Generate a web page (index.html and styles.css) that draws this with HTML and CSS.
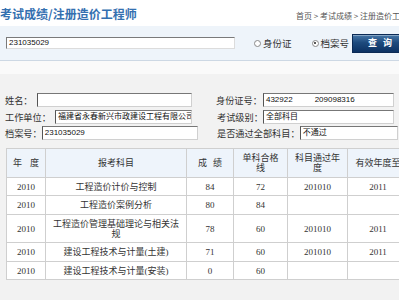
FILE: index.html
```html
<!DOCTYPE html>
<html lang="zh-CN">
<head>
<meta charset="utf-8">
<title>考试成绩/注册造价工程师</title>
<link rel="stylesheet" href="styles.css">
</head>
<body>
<div class="page">
  <div class="top">
    <h1 class="title">考试成绩/注册造价工程师</h1>
    <div class="crumbs">首页 &gt; 考试成绩 &gt; 注册造价工程师</div>
  </div>
  <div class="search">
    <div class="search-box">231035029</div>
    <label class="opt"><span class="radio"></span>身份证</label>
    <label class="opt opt-2"><span class="radio radio-on"></span>档案号</label>
    <button class="btn">查&nbsp;&nbsp;&nbsp;询</button>
  </div>
  <div class="spacer"></div>
  <div class="main">
    <div class="info">
      <div class="field"><span class="lbl">姓名：</span><span class="box box-name"></span></div>
      <div class="field field-r1"><span class="lbl">身份证号：</span><span class="box box-id">432922<span class="sp"></span>209098316</span></div>
      <div class="field"><span class="lbl">工作单位：</span><span class="box box-org">福建省永春新兴市政建设工程有限公司</span></div>
      <div class="field field-r"><span class="lbl">考试级别：</span><span class="box box-level">全部科目</span></div>
      <div class="field"><span class="lbl">档案号：</span><span class="box box-file">231035029</span></div>
      <div class="field field-r"><span class="lbl">是否通过全部科目：</span><span class="box box-pass">不通过</span></div>
    </div>
    <table class="scores">
      <colgroup>
        <col class="c1"><col class="c2"><col class="c3"><col class="c4"><col class="c5"><col class="c6">
      </colgroup>
      <thead>
        <tr>
          <th class="nw">年&nbsp;&nbsp;&nbsp;&nbsp;度</th>
          <th>报考科目</th>
          <th class="nw">成&nbsp;&nbsp;&nbsp;绩</th>
          <th>单科合格线</th>
          <th>科目通过年度</th>
          <th>有效年度至</th>
        </tr>
      </thead>
      <tbody>
        <tr><td>2010</td><td>工程造价计价与控制</td><td>84</td><td>72</td><td>201010</td><td>2011</td></tr>
        <tr><td>2010</td><td>工程造价案例分析</td><td>80</td><td>84</td><td></td><td></td></tr>
        <tr><td>2010</td><td>工程造价管理基础理论与相关法规</td><td>78</td><td>60</td><td>201010</td><td>2011</td></tr>
        <tr><td>2010</td><td>建设工程技术与计量(土建)</td><td>71</td><td>60</td><td>201010</td><td>2011</td></tr>
        <tr><td>2010</td><td>建设工程技术与计量(安装)</td><td>0</td><td>60</td><td></td><td></td></tr>
      </tbody>
    </table>
  </div>
</div>
</body>
</html>
```
FILE: styles.css
```css
html, body {
  margin: 0;
  padding: 0;
}
body {
  overflow: hidden;
  background: #f2f2f2;
  font-family: "Noto Sans CJK SC", "Liberation Sans", sans-serif;
  color: #333;
}
.page {
  width: 430px;
}
.top {
  height: 26px;
  background: #ffffff;
  display: flex;
  align-items: flex-end;
}
.title {
  margin: 0;
  flex: 0 0 296px;
  font-size: 12px;
  line-height: 14px;
  font-weight: bold;
  color: #3470b0;
  padding-bottom: 5px;
  white-space: nowrap;
}
.crumbs {
  font-size: 8px;
  line-height: 10px;
  color: #555;
  padding-bottom: 5px;
  white-space: nowrap;
}
.search {
  height: 34px;
  background: #eef4fa;
  border-bottom: 1px solid #cdd8e4;
  display: flex;
  align-items: center;
  padding-left: 6px;
}
.search-box {
  width: 229px;
  height: 12px;
  box-sizing: border-box;
  background: #fff;
  border-style: solid;
  border-width: 1px;
  border-color: #7a7a7a #dcdcdc #dcdcdc #7a7a7a;
  font-family: "Liberation Sans", sans-serif;
  font-size: 8px;
  line-height: 10px;
  padding-left: 2px;
  color: #111;
}
.opt {
  display: flex;
  align-items: center;
  font-size: 9.5px;
  line-height: 11px;
  color: #333;
  margin-left: 19px;
  white-space: nowrap;
}
.opt-2 {
  margin-left: 20px;
}
.radio {
  width: 7px;
  height: 7px;
  box-sizing: border-box;
  border: 1px solid #8a8a8a;
  border-radius: 50%;
  background: #fff;
  margin-right: 2px;
  position: relative;
}
.radio-on::after {
  content: "";
  position: absolute;
  left: 1.5px;
  top: 1.5px;
  width: 2px;
  height: 2px;
  border-radius: 50%;
  background: #222;
}
.btn {
  margin-left: 3px;
  width: 56px;
  height: 19px;
  flex: 0 0 56px;
  border: 1px solid #0b2a55;
  background: linear-gradient(#4677a8 0%, #1d4a7d 45%, #0c3263 100%);
  box-shadow: inset 0 1px 0 rgba(255,255,255,0.35);
  color: #fff;
  font-family: "Noto Sans CJK SC", sans-serif;
  font-size: 9px;
  font-weight: bold;
  line-height: 10px;
  padding: 0;
  white-space: nowrap;
}
.spacer {
  height: 13px;
  background: #fafafa;
}
.main {
  padding-top: 19px;
  padding-bottom: 20px;
}
.info {
  display: grid;
  grid-template-columns: 211px auto;
  row-gap: 2.5px;
  padding-left: 5px;
}
.field {
  display: flex;
  align-items: center;
  height: 14px;
}
.field-r {
  padding-left: 1px;
}
.lbl {
  font-size: 9.2px;
  line-height: 14px;
  color: #333;
  white-space: nowrap;
}
.box {
  display: block;
  height: 14px;
  box-sizing: border-box;
  background: #fff;
  border-style: solid;
  border-width: 1px;
  border-color: #777 #d0d0d0 #d0d0d0 #555;
  font-family: "Liberation Sans", "Noto Sans CJK SC", sans-serif;
  font-size: 8px;
  line-height: 12px;
  padding-left: 2px;
  color: #111;
  overflow: hidden;
  white-space: nowrap;
}
.box-name { width: 155px; margin-left: 4px; }
.box-org { width: 137px; margin-left: 4px; }
.box-file { width: 156px; margin-left: 0; }
.box-id { width: 131px; margin-left: 1px; }
.box-level { width: 131px; margin-left: 0; }
.box-pass { width: 98px; margin-left: 0; }
.sp {
  display: inline-block;
  width: 22px;
}
.scores {
  margin: 8px 0 0 6px;
  border-collapse: collapse;
  table-layout: fixed;
  width: 402px;
  background: #fff;
}
.c1 { width: 39px; }
.c2 { width: 141px; }
.c3 { width: 47px; }
.c4 { width: 54px; }
.c5 { width: 60px; }
.c6 { width: 61px; }
.scores th,
.scores td {
  border: 1px solid #cfcfcf;
  padding: 4px 5px 3.5px;
  font-family: "Liberation Serif", "Noto Sans CJK SC", serif;
  font-size: 9px;
  line-height: 10px;
  text-align: center;
  vertical-align: middle;
  color: #333;
  font-weight: normal;
}
.scores th {
  background: #eef4fb;
  font-family: "Noto Sans CJK SC", sans-serif;
}
.scores th.nw {
  white-space: nowrap;
  padding-left: 2px;
  padding-right: 2px;
}
```
